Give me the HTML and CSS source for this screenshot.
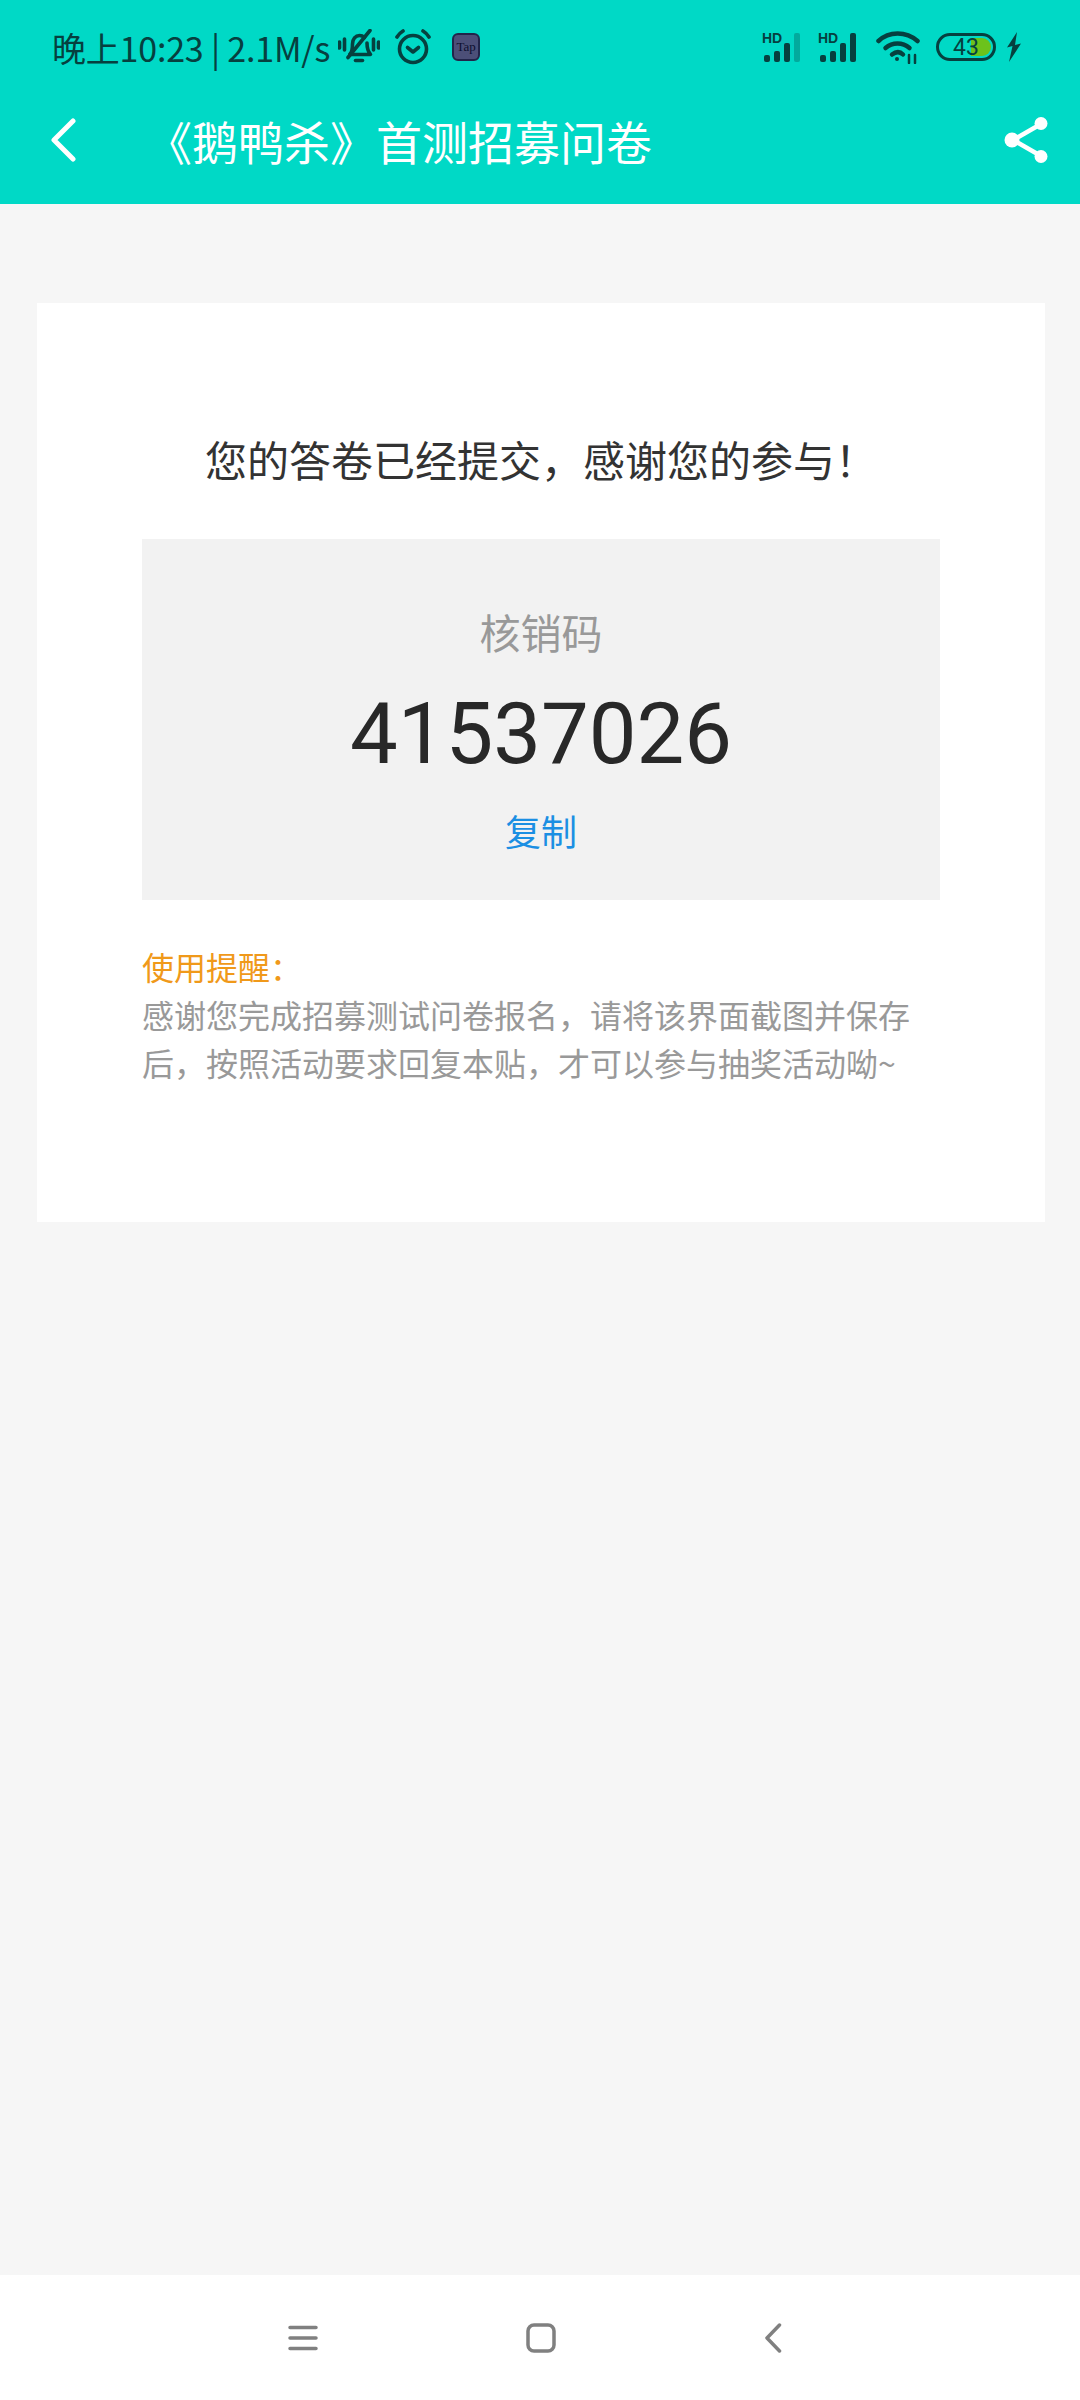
FILE: index.html
```html
<!DOCTYPE html>
<html lang="zh-CN">
<head>
    <meta charset="UTF-8">
    <meta name="viewport" content="width=device-width, initial-scale=1.0">
    <link rel="stylesheet" href="styles.css">
    <title>《鹅鸭杀》首测招募问卷</title>
</head>
<body>
    <header class="top">
        <div class="status">
            <span class="status-text">晚上10:23 | 2.1M/s</span>
            <!-- muted bell -->
            <svg class="ic-bell" width="42" height="36" viewBox="0 0 42 36" fill="none" stroke="#06403f" stroke-width="3.6" stroke-linecap="round" stroke-linejoin="round">
                <path d="M1.5 13v6M6.5 10v11M35.5 10v11M40.5 13v6"/>
                <path d="M12 25c2-2 2.500-5 2.500-10 0-5 3-8.500 7-8.500 2 0 3.500.6 5 2"/>
                <path d="M29 14c0 4 .5 8 3.500 11.500H12"/>
                <path d="M17.500 31.500h7"/>
                <path d="M10 28.500 32 1.500"/>
            </svg>
            <!-- alarm -->
            <svg class="ic-alarm" width="38" height="36" viewBox="0 0 38 36" fill="none" stroke="#06403f" stroke-width="3.6" stroke-linecap="round" stroke-linejoin="round">
                <circle cx="19" cy="20" r="13.500"/>
                <path d="M13.500 18.500 19 23l5.500-4.500"/>
                <path d="M3 8c1.500-2.500 3.500-4.500 6-6M35 8c-1.500-2.500-3.500-4.500-6-6"/>
            </svg>
            <span class="ic-tap">Tap</span>
            <span class="status-right">
                <svg width="46" height="32" viewBox="0 0 46 32">
                    <text x="0" y="12" class="hd">HD</text>
                    <rect x="2" y="24" width="6" height="7" rx="2" fill="#06403f"/>
                    <rect x="12" y="20" width="6" height="11" rx="2" fill="#06403f"/>
                    <rect x="22" y="12" width="6" height="19" rx="2" fill="#06403f"/>
                    <rect x="32" y="2" width="6" height="29" rx="2" fill="#06403f" opacity=".3"/>
                </svg>
                <svg width="46" height="32" viewBox="0 0 46 32">
                    <text x="0" y="12" class="hd">HD</text>
                    <rect x="2" y="24" width="6" height="7" rx="2" fill="#06403f"/>
                    <rect x="12" y="20" width="6" height="11" rx="2" fill="#06403f"/>
                    <rect x="22" y="12" width="6" height="19" rx="2" fill="#06403f"/>
                    <rect x="32" y="2" width="6" height="29" rx="2" fill="#06403f"/>
                </svg>
                <svg class="ic-wifi" width="44" height="34" viewBox="0 0 44 34" fill="none" stroke="#06403f" stroke-width="4.500" stroke-linecap="round">
                    <path d="M2.500 11C13 1 30 1 41.500 11"/>
                    <path d="M9.500 18c7-6 17-6 24 0"/>
                    <path d="M16 24.500c4-3 8-3 11 0"/>
                    <circle cx="21" cy="29" r="2" fill="#06403f" stroke="none"/>
                    <path d="M33 25v8M39 25v8" stroke-width="2.500"/>
                </svg>
                <span class="battery"><span class="battery-fill"></span><span class="battery-num">43</span></span>
                <svg class="ic-bolt" width="16" height="30" viewBox="0 0 16 30">
                    <path d="M11 0 1 15.500l5.500-1.500L3 30 15 11.500 9 13z" fill="#06403f"/>
                </svg>
            </span>
        </div>
        <div class="titlebar">
            <svg class="ic-back" width="26" height="44" viewBox="0 0 26 44" fill="none" stroke="#fff" stroke-width="5" stroke-linecap="round" stroke-linejoin="round">
                <path d="M23 3 4 22l19 19"/>
            </svg>
            <h1 class="title">《鹅鸭杀》首测招募问卷</h1>
            <svg class="ic-share" width="46" height="50" viewBox="0 0 46 50" fill="#fff" stroke="#fff" stroke-width="4.500">
                <path d="M37 9 9 25l28 16" fill="none"/>
                <circle cx="37" cy="8.500" r="6.500" stroke="none"/>
                <circle cx="8" cy="25" r="7.500" stroke="none"/>
                <circle cx="37" cy="41.500" r="6.500" stroke="none"/>
            </svg>
        </div>
    </header>

    <main class="page">
        <section class="card">
            <p class="done">您的答卷已经提交，感谢您的参与！</p>
            <div class="code-box">
                <div class="code-label">核销码</div>
                <div class="code-num">41537026</div>
                <a class="code-copy">复制</a>
            </div>
            <div class="tip-title">使用提醒：</div>
            <p class="tip-text">感谢您完成招募测试问卷报名，请将该界面截图并保存后，按照活动要求回复本贴，才可以参与抽奖活动呦~</p>
        </section>
    </main>

    <nav class="navbar">
        <svg width="30" height="26" viewBox="0 0 30 26" stroke="#808080" stroke-width="3.500" stroke-linecap="round">
            <path d="M2 2.500h26M2 13h26M2 23.500h26"/>
        </svg>
        <svg width="30" height="30" viewBox="0 0 30 30" fill="none" stroke="#808080" stroke-width="3.500">
            <rect x="2" y="2" width="26" height="26" rx="6"/>
        </svg>
        <svg width="18" height="30" viewBox="0 0 18 30" fill="none" stroke="#808080" stroke-width="3.500" stroke-linecap="round" stroke-linejoin="round">
            <path d="M15.500 2 3 15l12.500 13"/>
        </svg>
    </nav>
</body>
</html>
```
FILE: styles.css
```css
* {
    box-sizing: border-box;
}

body {
    margin: 0;
    width: 1080px;
    height: 2400px;
    display: flex;
    flex-direction: column;
    background-color: #f6f6f6;
    font-family: "Noto Sans CJK SC", "Noto Sans", sans-serif;
}

.top {
    height: 204px;
    background-color: #00d9c6;
}

.status {
    height: 94px;
    padding: 0 12px 0 52px;
    display: flex;
    align-items: center;
    color: #06403f;
}

.status-text {
    font-size: 34px;
    letter-spacing: -0.2px;
    white-space: nowrap;
}

.ic-bell {
    margin-left: 8px;
}

.ic-alarm {
    margin-left: 14px;
}

.ic-tap {
    margin-left: 20px;
    width: 28px;
    height: 28px;
    border-radius: 6px;
    background-color: #4c4f78;
    border: 2px solid #22254a;
    color: #0e1030;
    font-family: "Liberation Serif", serif;
    font-size: 13px;
    line-height: 24px;
    text-align: center;
    overflow: hidden;
}

.status-right {
    margin-left: auto;
    display: flex;
    align-items: center;
    gap: 10px;
    margin-right: 46px;
}

.hd {
    font-family: "Liberation Sans", sans-serif;
    font-size: 14px;
    font-weight: 700;
    fill: #06403f;
}

.ic-wifi {
    margin-left: 2px;
}

.battery {
    position: relative;
    width: 60px;
    height: 28px;
    margin-left: 6px;
    border: 3px solid #06403f;
    border-radius: 14px;
    display: flex;
    align-items: center;
    justify-content: center;
    overflow: hidden;
}

.battery-fill {
    position: absolute;
    top: 2px;
    bottom: 2px;
    left: 32px;
    right: 2px;
    border-radius: 0 10px 10px 0;
    background-color: #6cc21c;
}

.battery-num {
    position: relative;
    font-family: "Roboto", sans-serif;
    font-size: 23px;
    line-height: 1;
    color: #06403f;
}

.titlebar {
    height: 92px;
    padding: 0 30px 0 50px;
    display: flex;
    align-items: center;
}

.title {
    margin: 0 0 0 88px;
    flex: 1;
    font-size: 46px;
    font-weight: 400;
    color: #fff;
    white-space: nowrap;
    text-indent: -18px;
}

.page {
    flex: 1;
    padding: 99px 35px 0 37px;
}

.card {
    height: 919px;
    padding: 124px 105px 0;
    background-color: #fff;
}

.done {
    margin: 0 0 48px;
    font-size: 42px;
    line-height: 64px;
    color: #333;
    text-align: center;
}

.code-box {
    height: 361px;
    padding-top: 62px;
    background-color: #f2f2f2;
    text-align: center;
}

.code-label {
    font-size: 41px;
    line-height: 60px;
    color: #999;
}

.code-num {
    margin-top: 18px;
    font-family: "Roboto", sans-serif;
    font-size: 85px;
    line-height: 110px;
    color: #282828;
}

.code-copy {
    display: block;
    margin-top: 16px;
    font-size: 36px;
    line-height: 50px;
    color: #1b8fe3;
}

.tip-title {
    margin-top: 42px;
    font-size: 32px;
    line-height: 48px;
    color: #f0991a;
}

.tip-text {
    margin: 0;
    font-size: 32px;
    line-height: 48px;
    color: #999;
}

.navbar {
    height: 125px;
    padding: 0 298px 0 288px;
    display: flex;
    align-items: center;
    justify-content: space-between;
    background-color: #fff;
}
```
